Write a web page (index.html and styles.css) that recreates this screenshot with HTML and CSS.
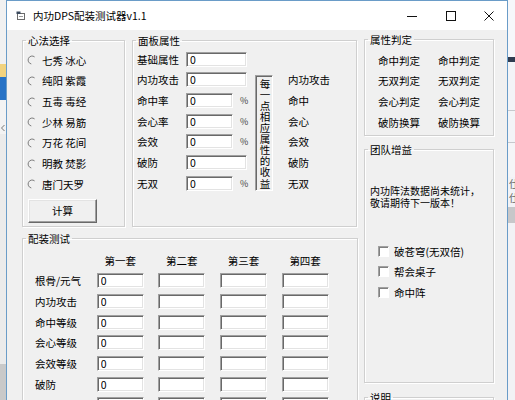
FILE: index.html
```html
<!DOCTYPE html>
<html lang="zh-CN">
<head>
<meta charset="utf-8">
<title>内功DPS配装测试器v1.1</title>
<link rel="stylesheet" href="styles.css">
</head>
<body>
<div class="desk">
  <div class="desk-left">
    <div class="dl dl-a"></div>
    <div class="dl dl-yellow"></div>
    <div class="dl dl-blue"></div>
    <div class="dl dl-b"></div>
    <div class="dl dl-arrow"><svg width="6" height="12" viewBox="0 0 6 12"><path d="M4.5 3L1.5 6l3 3" fill="none" stroke="#777"/></svg></div>
    <div class="dl dl-c"></div>
    <div class="dl dl-gray"></div>
  </div>

  <div class="window">
    <div class="titlebar">
      <svg class="app-icon" width="10" height="10" viewBox="0 0 10 10">
        <rect x="1.5" y="2.5" width="7" height="6" fill="#fff" stroke="#6b6b6b"/>
        <path d="M0.5 0.5h4v2.5h-4z" fill="#3b4a5e"/>
        <path d="M3 5.5h4" stroke="#9a9a9a"/>
      </svg>
      <span class="title">内功DPS配装测试器v1.1</span>
      <div class="controls">
        <span class="ctl ctl-min"><svg width="10" height="10" viewBox="0 0 10 10"><path d="M0 5.5h10" stroke="#111"/></svg></span>
        <span class="ctl ctl-max"><svg width="10" height="10" viewBox="0 0 10 10"><rect x="0.5" y="0.5" width="9" height="9" fill="none" stroke="#111"/></svg></span>
        <span class="ctl ctl-close"><svg width="10" height="10" viewBox="0 0 10 10"><path d="M0.5 0.5l9 9M9.5 0.5l-9 9" stroke="#111"/></svg></span>
      </div>
    </div>

    <div class="client">
      <div class="main-col">
        <div class="top-row">
          <fieldset class="grp g-xinfa">
            <legend>心法选择</legend>
            <div class="gbody">
              <div class="radios">
                <label class="radio"><svg class="rdo" width="10" height="10" viewBox="0 0 10 10"><path d="M7.6 1.9A4 4 0 1 0 4.3 8.95" fill="none" stroke="#7d7d7d"/></svg><span>七秀 冰心</span></label>
                <label class="radio"><svg class="rdo" width="10" height="10" viewBox="0 0 10 10"><path d="M7.6 1.9A4 4 0 1 0 4.3 8.95" fill="none" stroke="#7d7d7d"/></svg><span>纯阳 紫霞</span></label>
                <label class="radio"><svg class="rdo" width="10" height="10" viewBox="0 0 10 10"><path d="M7.6 1.9A4 4 0 1 0 4.3 8.95" fill="none" stroke="#7d7d7d"/></svg><span>五毒 毒经</span></label>
                <label class="radio"><svg class="rdo" width="10" height="10" viewBox="0 0 10 10"><path d="M7.6 1.9A4 4 0 1 0 4.3 8.95" fill="none" stroke="#7d7d7d"/></svg><span>少林 易筋</span></label>
                <label class="radio"><svg class="rdo" width="10" height="10" viewBox="0 0 10 10"><path d="M7.6 1.9A4 4 0 1 0 4.3 8.95" fill="none" stroke="#7d7d7d"/></svg><span>万花 花间</span></label>
                <label class="radio"><svg class="rdo" width="10" height="10" viewBox="0 0 10 10"><path d="M7.6 1.9A4 4 0 1 0 4.3 8.95" fill="none" stroke="#7d7d7d"/></svg><span>明教 焚影</span></label>
                <label class="radio"><svg class="rdo" width="10" height="10" viewBox="0 0 10 10"><path d="M7.6 1.9A4 4 0 1 0 4.3 8.95" fill="none" stroke="#7d7d7d"/></svg><span>唐门天罗</span></label>
              </div>
              <button class="btn">计算</button>
            </div>
          </fieldset>

          <fieldset class="grp g-panel">
            <legend>面板属性</legend>
            <div class="gbody panel-grid">
              <span class="lbl r1">基础属性</span>
              <span class="cell r1"><input class="inp wide" value="0"></span>

              <span class="lbl r2">内功攻击</span>
              <span class="cell r2"><input class="inp wide" value="0"></span>
              <div class="vbox">每一点相应属性的收益</div>
              <span class="rlbl r2">内功攻击</span>

              <span class="lbl r3">命中率</span>
              <span class="cell r3"><input class="inp narrow" value="0"><span class="pct">%</span></span>
              <span class="rlbl r3">命中</span>

              <span class="lbl r4">会心率</span>
              <span class="cell r4"><input class="inp narrow" value="0"><span class="pct">%</span></span>
              <span class="rlbl r4">会心</span>

              <span class="lbl r5">会效</span>
              <span class="cell r5"><input class="inp narrow" value="0"><span class="pct">%</span></span>
              <span class="rlbl r5">会效</span>

              <span class="lbl r6">破防</span>
              <span class="cell r6"><input class="inp wide" value="0"></span>
              <span class="rlbl r6">破防</span>

              <span class="lbl r7">无双</span>
              <span class="cell r7"><input class="inp narrow" value="0"><span class="pct">%</span></span>
              <span class="rlbl r7">无双</span>
            </div>
          </fieldset>
        </div>

        <fieldset class="grp g-test">
          <legend>配装测试</legend>
          <div class="gbody test-grid">
            <span></span><span class="hd">第一套</span><span class="hd">第二套</span><span class="hd">第三套</span><span class="hd">第四套</span>

            <span class="tl">根骨/元气</span><input class="inp" value="0"><input class="inp" value=""><input class="inp" value=""><input class="inp" value="">
            <span class="tl">内功攻击</span><input class="inp" value="0"><input class="inp" value=""><input class="inp" value=""><input class="inp" value="">
            <span class="tl">命中等级</span><input class="inp" value="0"><input class="inp" value=""><input class="inp" value=""><input class="inp" value="">
            <span class="tl">会心等级</span><input class="inp" value="0"><input class="inp" value=""><input class="inp" value=""><input class="inp" value="">
            <span class="tl">会效等级</span><input class="inp" value="0"><input class="inp" value=""><input class="inp" value=""><input class="inp" value="">
            <span class="tl">破防</span><input class="inp" value="0"><input class="inp" value=""><input class="inp" value=""><input class="inp" value="">
            <span class="tl">无双等级</span><input class="inp" value="0"><input class="inp" value=""><input class="inp" value=""><input class="inp" value="">
          </div>
        </fieldset>
      </div>

      <div class="side-col">
        <fieldset class="grp g-judge">
          <legend>属性判定</legend>
          <div class="gbody judge-grid">
            <span>命中判定</span><span>命中判定</span>
            <span>无双判定</span><span>无双判定</span>
            <span>会心判定</span><span>会心判定</span>
            <span>破防换算</span><span>破防换算</span>
          </div>
        </fieldset>

        <fieldset class="grp g-team">
          <legend>团队增益</legend>
          <div class="gbody team-body">
            <p class="notice">内功阵法数据尚未统计，<br>敬请期待下一版本！</p>
            <div class="checks">
              <label class="check"><span class="cbox"></span><span>破苍穹(无双倍)</span></label>
              <label class="check"><span class="cbox"></span><span>帮会桌子</span></label>
              <label class="check"><span class="cbox"></span><span>命中阵</span></label>
            </div>
          </div>
        </fieldset>

        <fieldset class="grp g-note">
          <legend>说明</legend>
        </fieldset>
      </div>
    </div>
  </div>

  <div class="desk-right">
    <div class="dr dr-a"></div>
    <div class="dr dr-dark"></div>
    <div class="dr dr-b"></div>
    <div class="dr dr-line"></div>
    <div class="dr dr-c"></div>
    <div class="dr dr-line"></div>
    <div class="dr dr-d"></div>
    <div class="dr dr-text">仕<br>仕</div>
    <div class="dr dr-gray"></div>
    <div class="dr dr-e"></div>
  </div>
</div>
</body>
</html>
```

FILE: styles.css
```css
* { box-sizing: border-box; }
html, body { margin: 0; padding: 0; }
body {
  width: 515px;
  height: 400px;
  overflow: hidden;
  background: #eef0f3;
  font-family: "Noto Sans CJK SC", "Microsoft YaHei", sans-serif;
  font-size: 10.5px;
  color: #000;
}

.desk { display: flex; height: 400px; }

/* desktop strips */
.desk-left { width: 6px; flex: none; display: flex; flex-direction: column; background: #ededed; }
.dl { flex: none; }
.dl-a { height: 64px; background: #f1f1f1; }
.dl-yellow { height: 13px; background: #f2d37e; }
.dl-blue { height: 23px; background: #2672c6; }
.dl-b { height: 22px; background: #f3f3f3; }
.dl-arrow { height: 12px; background: #f3f3f3; display: flex; }
.dl-c { height: 230px; background: #ebebeb; }
.dl-gray { flex: 1; background: #c9c9c9; }

.desk-right { width: 7px; flex: none; display: flex; flex-direction: column; background: #f2f3f6; overflow: hidden; }
.dr { flex: none; }
.dr-a { height: 57px; background: #f6f7fa; }
.dr-dark { height: 5px; background: #2f3c50; }
.dr-b { height: 48px; background: #f3f4f7; }
.dr-line { height: 1px; background: #c6c8cc; }
.dr-c { height: 31px; background: #f3f4f7; }
.dr-d { height: 34px; background: #f5f5f7; }
.dr-text { height: 30px; line-height: 14px; font-size: 10px; color: #666; white-space: nowrap; padding-left: 1px; overflow: hidden; }
.dr-gray { height: 16px; background: #c7c7c9; }
.dr-e { flex: 1; background: #f2f2f5; }

/* window */
.window {
  width: 502px;
  height: 400px;
  flex: none;
  border: 1px solid #6a9cc8;
  border-bottom: none;
  background: #f0f0f0;
  display: flex;
  flex-direction: column;
}
.titlebar {
  height: 29px;
  flex: none;
  background: #fff;
  display: flex;
  align-items: center;
}
.app-icon { margin-left: 9px; margin-right: 7px; flex: none; }
.title { font-size: 10.5px; line-height: 13px; color: #000; }
.controls { margin-left: auto; display: flex; height: 29px; }
.ctl { height: 29px; display: flex; align-items: center; justify-content: center; }
.ctl-min { width: 39px; }
.ctl-max { width: 39px; }
.ctl-close { width: 37px; }

.client { flex: 1; display: flex; padding-left: 15px; overflow: hidden; }
.main-col { width: 336px; flex: none; padding-top: 4px; display: flex; flex-direction: column; }
.top-row { display: flex; gap: 7px; flex: none; }
.side-col { width: 130px; flex: none; margin-left: 6px; padding-top: 3px; display: flex; flex-direction: column; }

/* group boxes */
fieldset.grp {
  flex: none;
  margin: 0;
  padding: 0;
  min-width: 0;
  border: 1px solid #cfcfcf;
  box-shadow: inset 1px 1px 0 #fff, 1px 1px 0 #fff;
}
fieldset.grp > legend {
  margin-left: 3px;
  padding: 0 2px;
  height: 13px;
  line-height: 13px;
  font-size: 10.5px;
}

/* 心法选择 */
fieldset.g-xinfa { width: 103px; height: 193px; }
.g-xinfa .gbody { padding: 3px 0 0 4px; }
.radios { display: flex; flex-direction: column; }
.radio { height: 20.67px; display: flex; align-items: center; }
.rdo { flex: none; margin-right: 5px; }
.btn {
  display: block;
  margin: 4px 0 0 1px;
  width: 69px;
  height: 24px;
  padding: 0;
  font: inherit;
  font-size: 10.5px;
  color: #000;
  background: #f0f0f0;
  border: 1px solid;
  border-color: #fff #696969 #696969 #fff;
  box-shadow: inset -1px -1px 0 #a0a0a0, inset 1px 1px 0 #e3e3e3;
}

/* inputs */
.inp {
  display: block;
  height: 15px;
  margin: 0;
  padding: 0 0 0 3px;
  font: inherit;
  font-size: 10.5px;
  line-height: 12px;
  color: #000;
  background: #fff;
  border: 1px solid;
  border-color: #a0a0a0 #fff #fff #a0a0a0;
  box-shadow: inset 1px 1px 0 #696969, inset -1px -1px 0 #e3e3e3;
  outline: none;
}

/* 面板属性 */
fieldset.g-panel { width: 225px; height: 193px; }
.panel-grid {
  padding: 2px 0 0 4px;
  display: grid;
  grid-template-columns: 49px 69px 33px auto;
  grid-template-rows: repeat(7, 20.67px);
  align-items: center;
}
.r1 { grid-row: 1; } .r2 { grid-row: 2; } .r3 { grid-row: 3; } .r4 { grid-row: 4; }
.r5 { grid-row: 5; } .r6 { grid-row: 6; } .r7 { grid-row: 7; }
.lbl { grid-column: 1; }
.cell { grid-column: 2; display: flex; align-items: center; }
.rlbl { grid-column: 4; }
.inp.wide { width: 61px; }
.inp.narrow { width: 47px; }
.pct { margin-left: 7px; font-size: 9px; color: #444; }
.vbox {
  grid-column: 3;
  grid-row: 2 / span 6;
  align-self: start;
  margin-top: 5px;
  width: 18px;
  height: 116px;
  padding: 2px 0 0 2px;
  line-height: 11.1px;
  font-size: 10.5px;
  text-align: center;
  word-break: break-all;
  border: 1px solid;
  border-color: #a0a0a0 #fff #fff #a0a0a0;
  box-shadow: inset 1px 1px 0 #696969;
}

/* 配装测试 */
fieldset.g-test { width: 336px; height: 200px; margin-top: 5px; }
.test-grid {
  padding: 5px 0 0 12px;
  display: grid;
  grid-template-columns: 47px repeat(4, 47px);
  column-gap: 14.67px;
  grid-auto-rows: 20.67px;
  align-items: center;
}
.hd { text-align: center; }
.test-grid .inp { width: 47px; }

/* 属性判定 */
fieldset.g-judge { height: 103px; }
.judge-grid {
  padding: 4px 0 0 13px;
  display: grid;
  grid-template-columns: 60px 60px;
  grid-auto-rows: 20.67px;
  align-items: center;
}

/* 团队增益 */
fieldset.g-team { height: 240px; margin-top: 7px; }
.team-body { padding: 0 0 0 5px; }
.notice { margin: 29px 0 0 0; line-height: 12px; font-size: 10px; }
.checks { margin-top: 32px; padding-left: 8px; display: flex; flex-direction: column; }
.check { height: 20.67px; display: flex; align-items: center; }
.cbox {
  width: 11px;
  height: 11px;
  flex: none;
  margin-right: 5px;
  background: #fff;
  border: 1px solid;
  border-color: #a0a0a0 #fff #fff #a0a0a0;
  box-shadow: inset 1px 1px 0 #808080;
}

/* 说明 */
fieldset.g-note { height: 50px; margin-top: 8px; }
```
